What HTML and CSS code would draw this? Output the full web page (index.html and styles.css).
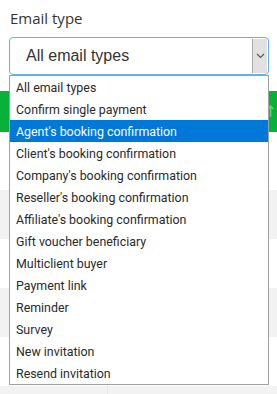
FILE: index.html
```html
<!DOCTYPE html>
<html>
<head>
<meta charset="utf-8">
<link rel="stylesheet" href="styles.css">
</head>
<body>
<div class="page">
  <div class="form-group">
    <label class="label">Email type</label>
    <div class="select">
      <span class="select-value">All email types</span>
      <span class="select-btn">
        <svg width="9" height="6" viewBox="0 0 9 6"><path d="M1 1 L4.5 4.5 L8 1" fill="none" stroke="#555" stroke-width="1.1"/></svg>
      </span>
    </div>
  </div>
  <div class="table">
    <div class="thead">
      <div class="th th-first"></div>
      <div class="th th-rest">
        <svg class="sort" width="7" height="13" viewBox="0 0 7 13"><path d="M3.5 1 V12 M0.8 4 L3.5 1 L6.2 4" fill="none" stroke="#5ed27a" stroke-width="1.6"/></svg>
      </div>
    </div>
    <div class="tr tr-first"><div class="td td-first"></div><div class="td"></div></div>
    <div class="tr odd"><div class="td td-first"></div><div class="td"></div></div>
    <div class="tr"><div class="td td-first"></div><div class="td"></div></div>
    <div class="tr odd"><div class="td td-first"></div><div class="td"></div></div>
    <div class="tr"><div class="td td-first"></div><div class="td"></div></div>
    <div class="tr odd"><div class="td td-first"></div><div class="td"></div></div>
  </div>
  <ul class="dropdown">
    <li>All email types</li>
    <li>Confirm single payment</li>
    <li class="active">Agent's booking confirmation</li>
    <li>Client's booking confirmation</li>
    <li>Company's booking confirmation</li>
    <li>Reseller's booking confirmation</li>
    <li>Affiliate's booking confirmation</li>
    <li>Gift voucher beneficiary</li>
    <li>Multiclient buyer</li>
    <li>Payment link</li>
    <li>Reminder</li>
    <li>Survey</li>
    <li>New invitation</li>
    <li>Resend invitation</li>
  </ul>
</div>
</body>
</html>
```
FILE: styles.css
```css
html, body {
  margin: 0;
  padding: 0;
  background: #fff;
}
.page {
  position: relative;
  width: 277px;
  height: 394px;
  overflow: hidden;
}
.form-group {
  padding: 7px 9px 0 9px;
  display: flex;
  flex-direction: column;
}
.label {
  font-family: "Open Sans", sans-serif;
  font-size: 15px;
  line-height: 22px;
  color: #333;
  padding-left: 1px;
  margin-bottom: 8px;
}
.select {
  box-sizing: border-box;
  height: 38px;
  width: 260px;
  border: 1px solid #66afe9;
  border-radius: 4px;
  display: flex;
  align-items: stretch;
  justify-content: space-between;
  background: #fff;
}
.select-value {
  font-family: "Liberation Sans", Arial, sans-serif;
  font-size: 16px;
  color: #333;
  padding-left: 16px;
  display: flex;
  align-items: center;
}
.select-btn {
  width: 14px;
  margin: 1px 1px 1px 0;
  background: #e1e1e1;
  border-left: 1px solid #a6a6a6;
  display: flex;
  align-items: center;
  justify-content: center;
}
.table {
  margin-top: 16px;
  display: flex;
  flex-direction: column;
}
.thead {
  height: 41px;
  background: #07b23a;
  display: flex;
}
.th-first {
  width: 108px;
}
.th-rest {
  flex: 1;
  display: flex;
  justify-content: flex-end;
  align-items: flex-end;
  padding: 0 3px 14px 0;
}
.tr {
  height: 49px;
  display: flex;
  background: #fff;
}
.tr-first {
  height: 58px;
}
.tr.odd {
  background: #f2f2f2;
}
.td {
  flex: 1;
}
.td-first {
  flex: 0 0 108px;
  border-right: 1px solid #e6e6e6;
  box-sizing: border-box;
}
.dropdown {
  position: absolute;
  left: 9px;
  top: 75px;
  width: 258px;
  margin: 0;
  padding: 0;
  list-style: none;
  background: #fff;
  border: 1px solid #a0a0a0;
}
.dropdown li {
  height: 22px;
  line-height: 23px;
  padding-left: 6px;
  font-family: Roboto, sans-serif;
  font-size: 12.4px;
  color: #2a2a2a;
  white-space: nowrap;
}
.dropdown li.active {
  background: #0078d7;
  color: #fff;
}
```
